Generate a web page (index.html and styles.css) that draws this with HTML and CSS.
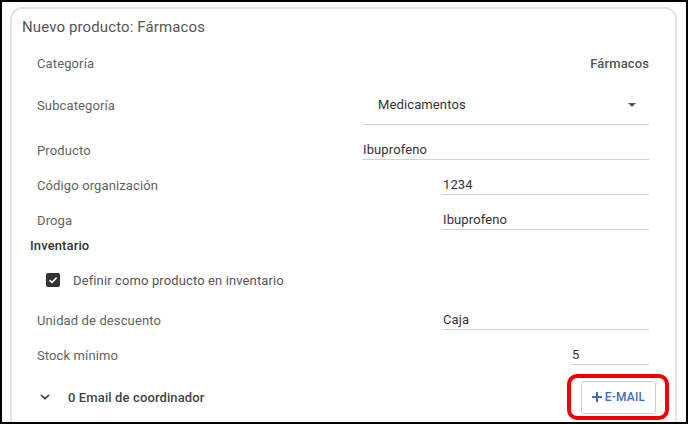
FILE: index.html
```html
<!DOCTYPE html>
<html lang="es">
<head>
    <meta charset="UTF-8">
    <meta name="viewport" content="width=device-width, initial-scale=1.0">
    <title>Nuevo producto</title>
    <link rel="stylesheet" href="styles.css">
</head>
<body>
    <div class="frame">
        <div class="card">
            <div class="card-title">Nuevo producto: Fármacos</div>

            <div class="row row-static">
                <span class="label">Categoría</span>
                <span class="static-value">Fármacos</span>
            </div>

            <div class="row row-select">
                <span class="label">Subcategoría</span>
                <div class="select field-wide">
                    <span>Medicamentos</span>
                    <span class="caret"></span>
                </div>
            </div>

            <div class="row row-input first">
                <span class="label">Producto</span>
                <div class="input field-wide">Ibuprofeno</div>
            </div>
            <div class="row row-input">
                <span class="label">Código organización</span>
                <div class="input field-mid">1234</div>
            </div>
            <div class="row row-input">
                <span class="label">Droga</span>
                <div class="input field-mid">Ibuprofeno</div>
            </div>

            <div class="section">Inventario</div>

            <div class="check-row">
                <span class="checkbox">
                    <svg width="10" height="10" viewBox="0 0 10 10"><path d="M1.5 5.2 L4 7.5 L8.6 2.6" fill="none" stroke="#fff" stroke-width="1.6"/></svg>
                </span>
                <span class="check-label">Definir como producto en inventario</span>
            </div>

            <div class="row row-input after-check">
                <span class="label">Unidad de descuento</span>
                <div class="input field-mid">Caja</div>
            </div>
            <div class="row row-input">
                <span class="label">Stock mínimo</span>
                <div class="input field-small">5</div>
            </div>

            <div class="email-row">
                <div class="email-toggle">
                    <svg class="chevron" width="10" height="6" viewBox="0 0 10 6"><path d="M1 1 L5 4.6 L9 1" fill="none" stroke="#333" stroke-width="1.6"/></svg>
                    <span>0 Email de coordinador</span>
                </div>
                <div class="highlight">
                    <button class="add-btn">
                        <svg width="10" height="10" viewBox="0 0 10 10"><path d="M5 0 V10 M0 5 H10" stroke="#3f6cc0" stroke-width="2"/></svg>
                        <span>E-MAIL</span>
                    </button>
                </div>
            </div>
        </div>
    </div>
</body>
</html>
```

FILE: styles.css
```css
body {
    margin: 0;
    font-family: Roboto, "Liberation Sans", Arial, sans-serif;
    font-size: 13px;
    letter-spacing: 0.12px;
    color: #333;
}
.frame {
    width: 688px;
    height: 424px;
    box-sizing: border-box;
    border: 2px solid #000;
    background: #fff;
    overflow: hidden;
}
.card {
    margin: 5px 9px 0 8px;
    height: 440px;
    border: 2px solid #e4e4e4;
    border-radius: 12px;
    padding-top: 8px;
    box-sizing: border-box;
}
.card-title {
    padding-left: 10px;
    font-size: 15px;
    line-height: 20px;
    color: #555;
}
.row {
    display: flex;
    justify-content: space-between;
    align-items: center;
    padding: 0 26px 0 25px;
}
.label {
    color: #636363;
}
.row-static {
    height: 36px;
    margin-top: 8px;
}
.static-value {
    font-weight: 500;
    color: #555;
}
.row-select {
    height: 48px;
}
.row-input {
    height: 35px;
}
.row-input.first {
    margin-top: 4px;
}
.row-input.after-check {
    margin-top: 5px;
}
.field-wide { width: 286px; }
.field-mid { width: 206px; }
.field-small { width: 77px; }
.select {
    height: 39px;
    box-sizing: border-box;
    border-bottom: 1px solid #d2d2d2;
    padding: 0 13px 0 15px;
    display: flex;
    align-items: center;
    justify-content: space-between;
    color: #333;
}
.caret {
    width: 0;
    height: 0;
    border-left: 4px solid transparent;
    border-right: 4px solid transparent;
    border-top: 4px solid #555;
}
.input {
    height: 18px;
    line-height: 18px;
    border-bottom: 1px solid #d2d2d2;
    padding-left: 1px;
    box-sizing: content-box;
    color: #333;
}
.section {
    padding-left: 18px;
    line-height: 16px;
    font-weight: 500;
    color: #333;
}
.check-row {
    display: flex;
    align-items: center;
    gap: 13px;
    height: 36px;
    margin-top: 8px;
    padding-left: 34px;
}
.checkbox {
    width: 14px;
    height: 14px;
    border-radius: 2px;
    background: #333;
    display: flex;
    align-items: center;
    justify-content: center;
}
.check-label {
    color: #555;
}
.email-row {
    height: 48px;
    display: flex;
    align-items: center;
    justify-content: space-between;
    padding: 0 19px 0 28px;
}
.email-toggle {
    display: flex;
    align-items: center;
    gap: 18px;
    font-weight: 500;
    color: #444;
}
.highlight {
    position: relative;
}
.highlight::after {
    content: "";
    position: absolute;
    top: -7px;
    bottom: -6px;
    left: -14px;
    right: -13px;
    border: 4px solid #f00000;
    border-radius: 10px;
    pointer-events: none;
}
.add-btn {
    width: 75px;
    height: 33px;
    background: #fff;
    border: 1px solid #d0d0d0;
    border-radius: 3px;
    display: flex;
    align-items: center;
    justify-content: center;
    gap: 3px;
    font-family: Roboto, "Liberation Sans", Arial, sans-serif;
    font-size: 12px;
    font-weight: 500;
    letter-spacing: 0.2px;
    color: #3f6cc0;
    padding: 0;
}
```
